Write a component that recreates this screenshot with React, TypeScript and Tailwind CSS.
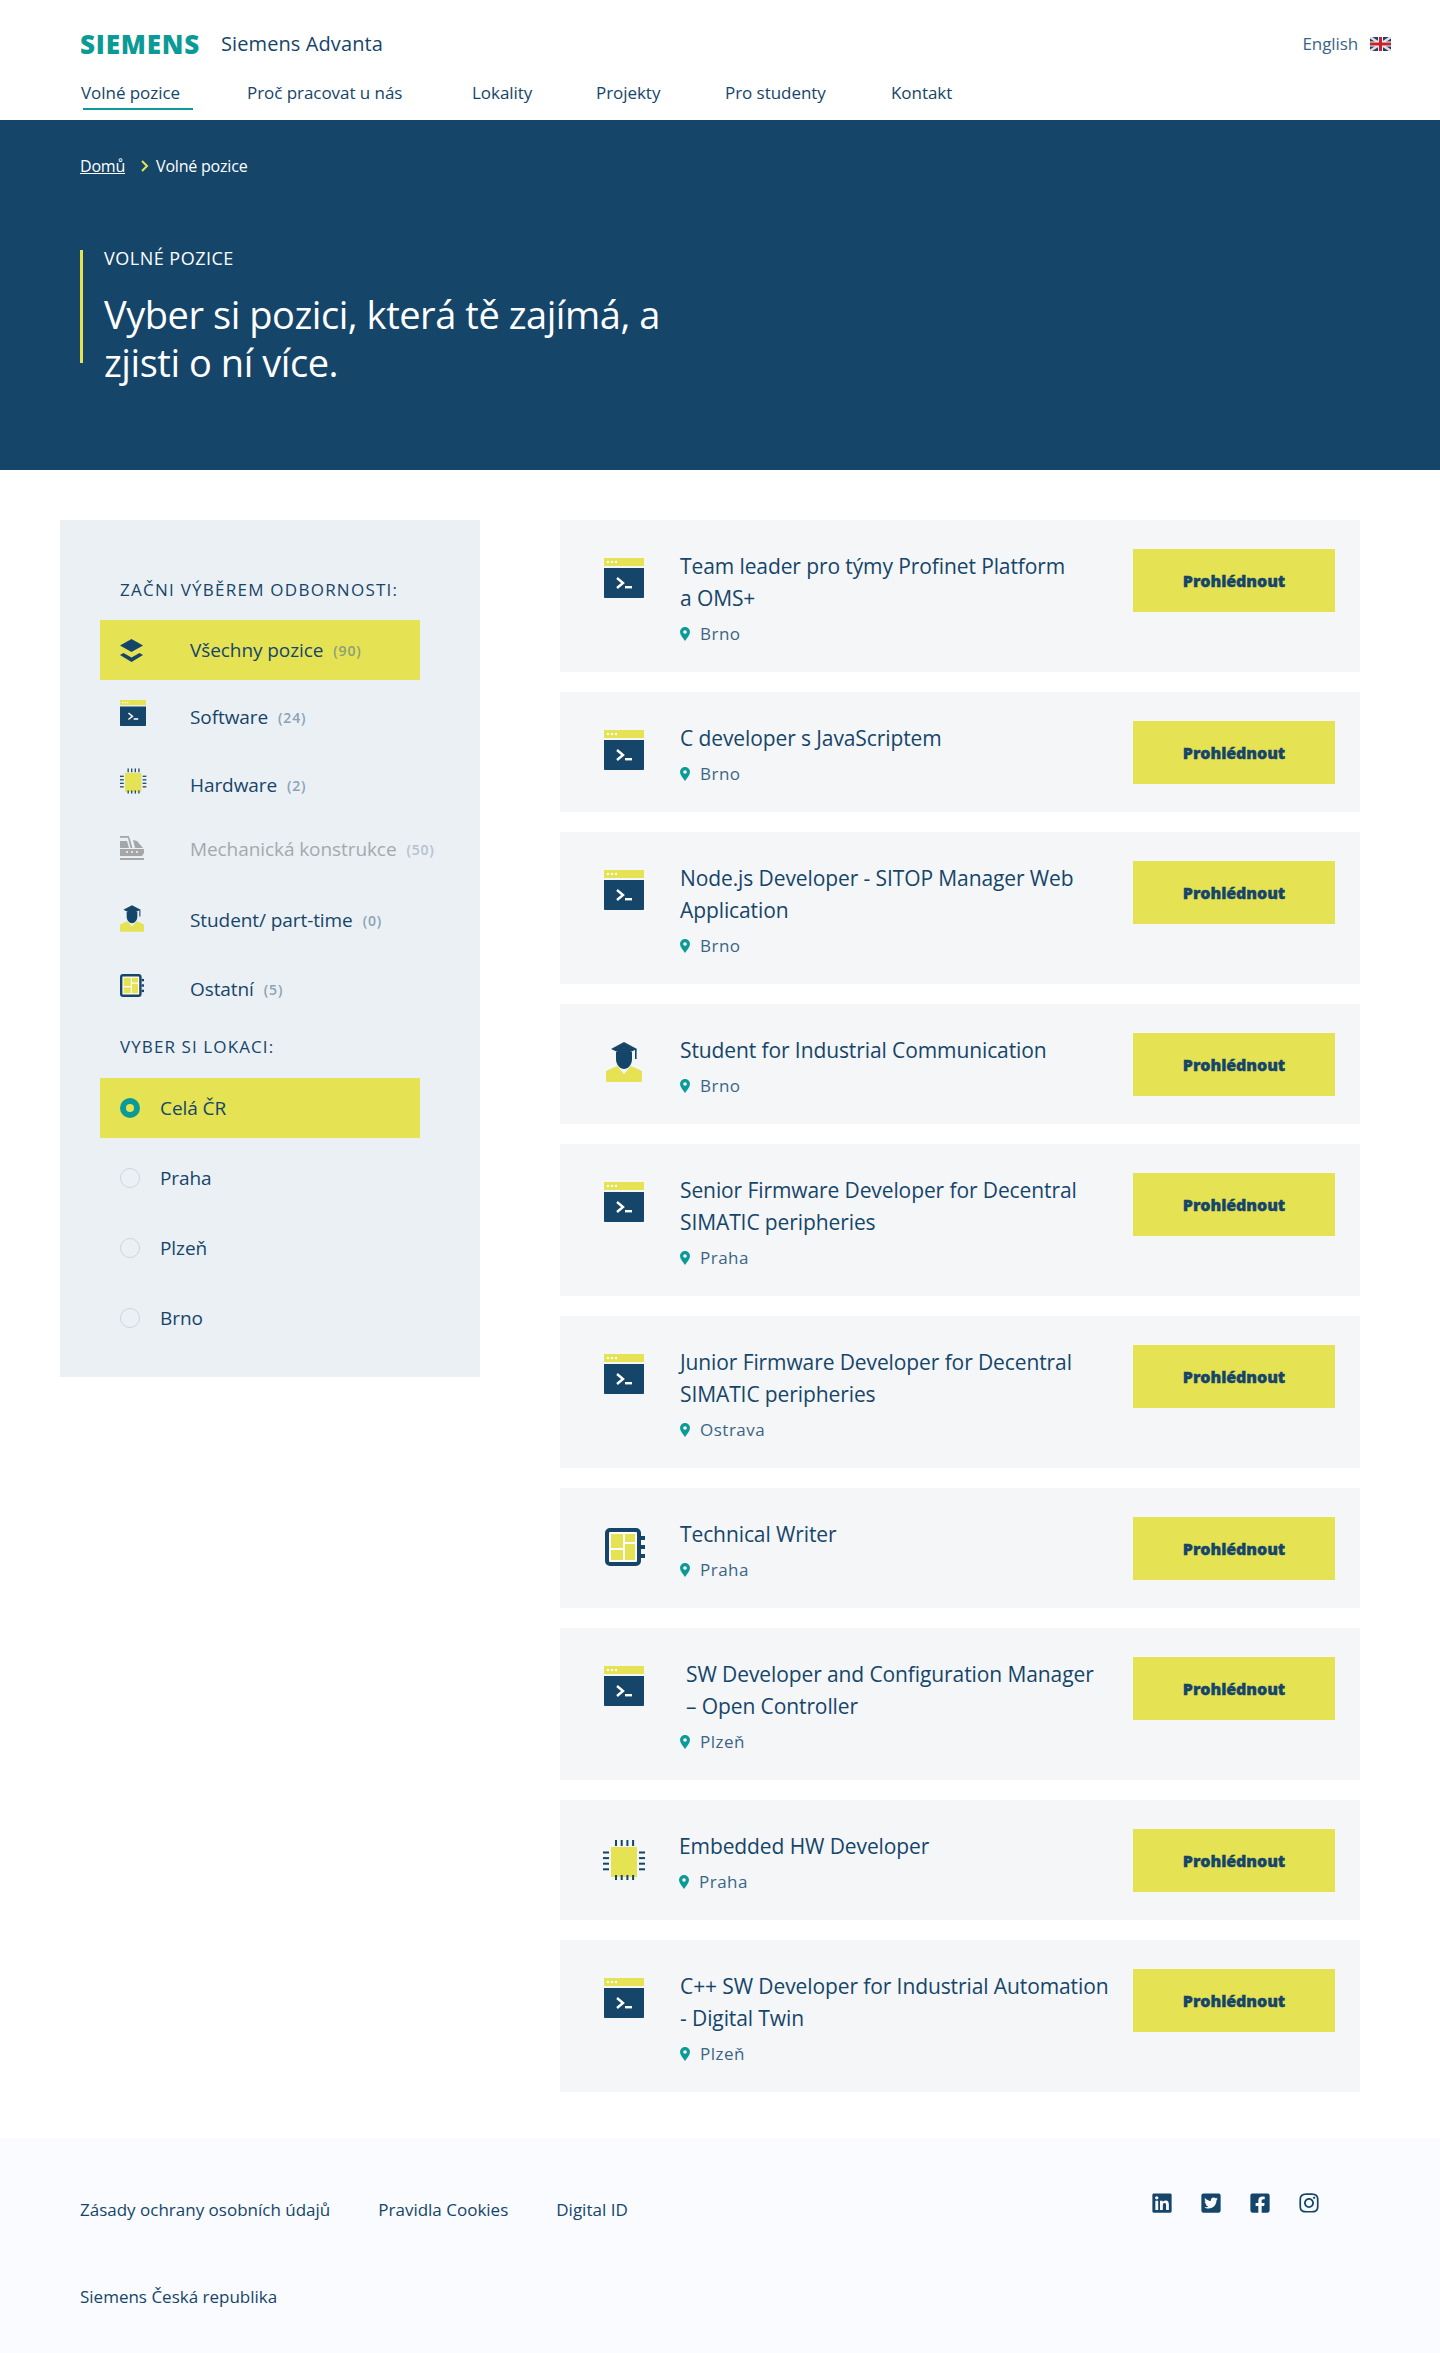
import type { ReactNode } from "react";
import { FaFacebookSquare, FaInstagram, FaLinkedin, FaTwitterSquare } from "react-icons/fa";

const NAVY = "#16456a";
const YELLOW = "#e5e353";

function SoftwareIcon({ size = 40 }: { size?: number }) {
  return (
    <svg width={size} height={size} viewBox="0 0 40 40" className="shrink-0">
      <rect x="0" y="0" width="40" height="8" fill={YELLOW} />
      <circle cx="4" cy="4" r="1.2" fill="#fff" />
      <circle cx="8" cy="4" r="1.2" fill="#fff" />
      <circle cx="12" cy="4" r="1.2" fill="#fff" />
      <path d="M0 10h40v29a1 1 0 0 1-1 1H1a1 1 0 0 1-1-1z" fill={NAVY} />
      <path d="M13 20l6 5-6 5" fill="none" stroke="#fff" strokeWidth="2.4" />
      <rect x="21" y="28" width="7" height="2.4" fill="#fff" />
    </svg>
  );
}

function ChipIcon({ width = 43, height = 40 }: { width?: number; height?: number }) {
  const pins = [0, 1, 2, 3];
  return (
    <svg width={width} height={height} viewBox="0 0 43 40" className="shrink-0">
      <rect x="8" y="7" width="26" height="30" fill={YELLOW} />
      {pins.map((i) => (
        <g key={i} fill={NAVY}>
          <rect x={12 + i * 5.7} y="0" width="2" height="6" />
          <rect x={12 + i * 5.7} y="35" width="2" height="5" />
          <rect x="0" y={11.5 + i * 5.6} width="6" height="2" />
          <rect x="36" y={11.5 + i * 5.6} width="6" height="2" />
        </g>
      ))}
    </svg>
  );
}

function StudentIcon({ width = 36, height = 40 }: { width?: number; height?: number }) {
  return (
    <svg width={width} height={height} viewBox="0 0 36 40" className="shrink-0">
      <path d="M0 40V29l11-5 7 8 7-8 11 5v11z" fill={YELLOW} />
      <path d="M10 10h16v7c0 6-4 10-8 10s-8-4-8-10z" fill={NAVY} />
      <path d="M18 0L31 7l-13 6L5 7z" fill={NAVY} />
      <rect x="29" y="7" width="1.6" height="10" fill={NAVY} />
    </svg>
  );
}

function BoardIcon({ width = 40, height = 38 }: { width?: number; height?: number }) {
  return (
    <svg width={width} height={height} viewBox="0 0 40 38" className="shrink-0">
      <rect x="2" y="2" width="32" height="34" rx="3" fill="#fff" stroke={NAVY} strokeWidth="4" />
      <rect x="6" y="6" width="12" height="14" fill={YELLOW} />
      <rect x="20" y="6" width="10" height="8" fill={YELLOW} />
      <rect x="6" y="22" width="12" height="10" fill={YELLOW} />
      <rect x="20" y="16" width="10" height="16" fill={YELLOW} />
      <rect x="36" y="8" width="4" height="4" fill={NAVY} />
      <rect x="36" y="17" width="4" height="4" fill={NAVY} />
      <rect x="36" y="26" width="4" height="4" fill={NAVY} />
    </svg>
  );
}

function LayersIcon() {
  return (
    <svg width="23" height="23" viewBox="0 0 23 23" className="shrink-0">
      <path d="M11.5 0L23 6.5 11.5 13 0 6.5z" fill={NAVY} />
      <path d="M3.5 14l8 4.5 8-4.5 3.5 2-11.5 7L0 16z" fill={NAVY} />
    </svg>
  );
}

function TrainIcon() {
  return (
    <svg width="24" height="24" viewBox="0 0 24 24" className="shrink-0" fill="#a4a6a8">
      <rect x="0" y="0" width="9" height="1.8" />
      <path d="M0 5h7l2 7H0z" />
      <path d="M8 2l1.5-.5 3 10.5h-2z" />
      <path d="M13 4l4 1 6 7h-8z" />
      <path d="M0 13h24v4l-2 3H0z" />
      <rect x="0" y="22" width="24" height="2" />
      <g fill="#ebf0f5">
        <circle cx="7" cy="16" r="1.1" />
        <circle cx="12" cy="16" r="1.1" />
        <circle cx="17" cy="16" r="1.1" />
      </g>
    </svg>
  );
}

function PinIcon() {
  return (
    <svg width="10" height="14" viewBox="0 0 10 14" className="shrink-0">
      <path d="M5 0a5 5 0 0 1 5 5c0 3-3 6-5 9-2-3-5-6-5-9a5 5 0 0 1 5-5z" fill="#0b9a95" />
      <circle cx="5" cy="5" r="1.8" fill="#fff" />
    </svg>
  );
}

function UkFlag() {
  return (
    <svg width="21" height="14" viewBox="0 0 21 14" className="shrink-0">
      <rect width="21" height="14" fill={NAVY} />
      <path d="M0 0l21 14M21 0L0 14" stroke="#f0d8d8" strokeWidth="2.6" />
      <path d="M10.5 0v14M0 7h21" stroke="#f4f4f4" strokeWidth="5" />
      <path d="M10.5 0v14M0 7h21" stroke="#c8202f" strokeWidth="3" />
    </svg>
  );
}

const navItems = [
  { label: "Volné pozice", className: "w-[167px] pl-[1px]", active: true },
  { label: "Proč pracovat u nás", className: "w-[225px]" },
  { label: "Lokality", className: "w-[124px]" },
  { label: "Projekty", className: "w-[129px]" },
  { label: "Pro studenty", className: "w-[166px]" },
  { label: "Kontakt", className: "" },
];

const categories: {
  label: string;
  count: number;
  icon: ReactNode;
  rowClass: string;
  iconClass: string;
  muted?: boolean;
  active?: boolean;
}[] = [
  { label: "Všechny pozice", count: 90, icon: <LayersIcon />, rowClass: "h-[60px] bg-[#e5e353] mb-[3px]", iconClass: "", active: true },
  { label: "Software", count: 24, icon: <SoftwareIcon size={26} />, rowClass: "h-[68px]", iconClass: "-translate-y-[4px]" },
  { label: "Hardware", count: 2, icon: <ChipIcon width={27} height={26} />, rowClass: "h-[68px]", iconClass: "-translate-y-[4px]" },
  { label: "Mechanická konstrukce", count: 50, icon: <TrainIcon />, rowClass: "h-[60px]", iconClass: "-translate-y-[1px]", muted: true },
  { label: "Student/ part-time", count: 0, icon: <StudentIcon width={24} height={27} />, rowClass: "h-[70px] mt-[6px]", iconClass: "-translate-y-[2px]" },
  { label: "Ostatní", count: 5, icon: <BoardIcon width={24} height={23} />, rowClass: "h-[68px]", iconClass: "-translate-y-[4px]" },
];

const locations = ["Celá ČR", "Praha", "Plzeň", "Brno"];

const jobs: { title: ReactNode; city: string; icon: ReactNode; indent?: boolean; iconClass?: string }[] = [
  { title: <>Team leader pro týmy Profinet Platform<br />a OMS+</>, city: "Brno", icon: <SoftwareIcon /> },
  { title: "C developer s JavaScriptem", city: "Brno", icon: <SoftwareIcon /> },
  { title: <>Node.js Developer - SITOP Manager Web<br />Application</>, city: "Brno", icon: <SoftwareIcon /> },
  { title: "Student for Industrial Communication", city: "Brno", icon: <StudentIcon />, iconClass: "pl-[2px]" },
  { title: <>Senior Firmware Developer for Decentral<br />SIMATIC peripheries</>, city: "Praha", icon: <SoftwareIcon /> },
  { title: <>Junior Firmware Developer for Decentral<br />SIMATIC peripheries</>, city: "Ostrava", icon: <SoftwareIcon /> },
  { title: "Technical Writer", city: "Praha", icon: <BoardIcon />, iconClass: "pl-[1px] pt-[11px]" },
  { title: <>SW Developer and Configuration Manager<br />– Open Controller</>, city: "Plzeň", icon: <SoftwareIcon />, indent: true },
  { title: "Embedded HW Developer", city: "Praha", icon: <ChipIcon />, iconClass: "-ml-[1px] pt-[11px]" },
  { title: <>C++ SW Developer for Industrial Automation<br />- Digital Twin</>, city: "Plzeň", icon: <SoftwareIcon /> },
];

function JobCard({ job }: { job: (typeof jobs)[number] }) {
  return (
    <div className="flex bg-[#f4f6f8] pl-[44px] pr-[25px] pt-[29px] pb-[25px]">
      <div className={`w-[76px] shrink-0 pt-[9px] ${job.iconClass ?? ""}`}>{job.icon}</div>
      <div className="min-w-0 flex-1">
        <h3 className={`mt-[1px] whitespace-nowrap text-[21px] leading-[32px] tracking-[-0.1px] text-[#16456a] ${job.indent ? "pl-[6px]" : ""}`}>
          {job.title}
        </h3>
        <div className="mt-[7px] flex items-center gap-[10px] text-[17px] leading-[26px] tracking-[0.5px] text-[#3c6585]">
          <PinIcon />
          {job.city}
        </div>
      </div>
      <a className="flex h-[63px] w-[202px] shrink-0 items-center justify-center bg-[#e5e353] text-[16px] font-extrabold tracking-[-0.05px] text-[#16456a] [-webkit-text-stroke:0.4px_#16456a]">
        Prohlédnout
      </a>
    </div>
  );
}

export default function App() {
  return (
    <div className="min-h-[2353px] bg-white font-['Open_Sans',sans-serif] text-[#16456a]">
      <header className="h-[120px] pl-[80px] pr-[49px]">
        <div className="flex h-[80px] items-center pt-[8px]">
          <span className="w-[141px] text-[26px] font-extrabold tracking-[0.8px] text-[#0b9a95]">SIEMENS</span>
          <span className="text-[20px] tracking-[0.1px]">Siemens Advanta</span>
          <div className="ml-auto flex items-center gap-[12px] text-[17px] tracking-[-0.1px] text-[#3c6585]">
            English
            <UkFlag />
          </div>
        </div>
        <nav className="flex text-[17px] tracking-[-0.05px]">
          {navItems.map((item) => (
            <a key={item.label} className={`relative h-[30px] leading-[26px] ${item.className}`}>
              {item.label}
              {item.active && <span className="absolute bottom-0 left-[3px] h-[2px] w-[110px] bg-[#0b9a95]" />}
            </a>
          ))}
        </nav>
      </header>

      <section className="h-[350px] bg-[#16456a] px-[80px] pt-[34px] text-white">
        <div className="flex items-center text-[16px] leading-[24px] tracking-[-0.2px]">
          <a className="underline">Domů</a>
          <svg width="8" height="12" viewBox="0 0 8 12" className="ml-[16px] mr-[7px]">
            <path d="M1 1l5 5-5 5" fill="none" stroke={YELLOW} strokeWidth="2" />
          </svg>
          <span>Volné pozice</span>
        </div>
        <div className="mt-[72px] flex h-[113px] w-[640px] flex-col border-l-[3px] border-[#e5e353] pl-[21px]">
          <p className="-mt-[4px] text-[18px] leading-[24px] tracking-[0.5px]">VOLNÉ POZICE</p>
          <h1 className="mt-[20px] text-[38px] leading-[48px] tracking-[-0.45px]">
            Vyber si pozici, která tě zajímá, a
            <br />
            zjisti o ní více.
          </h1>
        </div>
      </section>

      <main className="flex items-start pl-[60px] pt-[50px]">
        <aside className="h-[857px] w-[420px] bg-[#ebf0f5] pl-[40px] pt-[56px]">
          <p className="pl-[20px] text-[17px] leading-[28px] tracking-[1.25px]">ZAČNI VÝBĚREM ODBORNOSTI:</p>
          <ul className="mt-[16px]">
            {categories.map((cat) => (
              <li key={cat.label} className={`flex w-[320px] items-center pl-[20px] ${cat.rowClass}`}>
                <span className={`flex w-[70px] shrink-0 ${cat.iconClass}`}>{cat.icon}</span>
                <span className={`whitespace-nowrap text-[19px] tracking-[-0.08px] ${cat.muted ? "text-[#a6a9ac]" : ""}`}>{cat.label}</span>
                <span className={`ml-[10px] whitespace-nowrap text-[14px] font-semibold tracking-[0.8px] ${cat.active ? "text-[#8a9f7a]" : cat.muted ? "text-[#b4c2ce]" : "text-[#8aa2b5]"}`}>
                  ({cat.count})
                </span>
              </li>
            ))}
          </ul>
          <p className="mt-[10px] pl-[20px] text-[17px] leading-[28px] tracking-[1.1px]">VYBER SI LOKACI:</p>
          <ul className="mt-[17px]">
            {locations.map((city, i) => (
              <li key={city} className={`flex w-[320px] items-center pl-[20px] text-[19px] tracking-[-0.08px] ${i === 0 ? "h-[60px] bg-[#e5e353]" : "h-[70px]"} ${i === 1 ? "mt-[5px]" : ""}`}>
                {i === 0 ? (
                  <span className="mr-[20px] flex h-[20px] w-[20px] items-center justify-center rounded-full bg-[#0b9a95]">
                    <span className="h-[8px] w-[8px] rounded-full bg-[#e5e353]" />
                  </span>
                ) : (
                  <span className="mr-[20px] h-[20px] w-[20px] rounded-full border border-[#ccd5dd]" />
                )}
                {city}
              </li>
            ))}
          </ul>
        </aside>

        <div className="ml-[80px] flex w-[800px] flex-col gap-[20px]">
          {jobs.map((job, i) => (
            <JobCard key={i} job={job} />
          ))}
        </div>
      </main>

      <footer className="mt-[46px] h-[215px] bg-[#f9fbfe] px-[80px]">
        <div className="flex pt-[54px]">
          <div className="flex gap-[48px] pt-[6px] text-[17px] leading-[24px] tracking-[0px]">
            <a>Zásady ochrany osobních údajů</a>
            <a>Pravidla Cookies</a>
            <a>Digital ID</a>
          </div>
          <div className="ml-auto mr-[40px] flex gap-[27px] text-[22px] text-[#16456a]">
            <FaLinkedin />
            <FaTwitterSquare />
            <FaFacebookSquare />
            <FaInstagram />
          </div>
        </div>
        <p className="mt-[63px] text-[17px] leading-[24px] tracking-[0px]">Siemens Česká republika</p>
      </footer>
    </div>
  );
}
